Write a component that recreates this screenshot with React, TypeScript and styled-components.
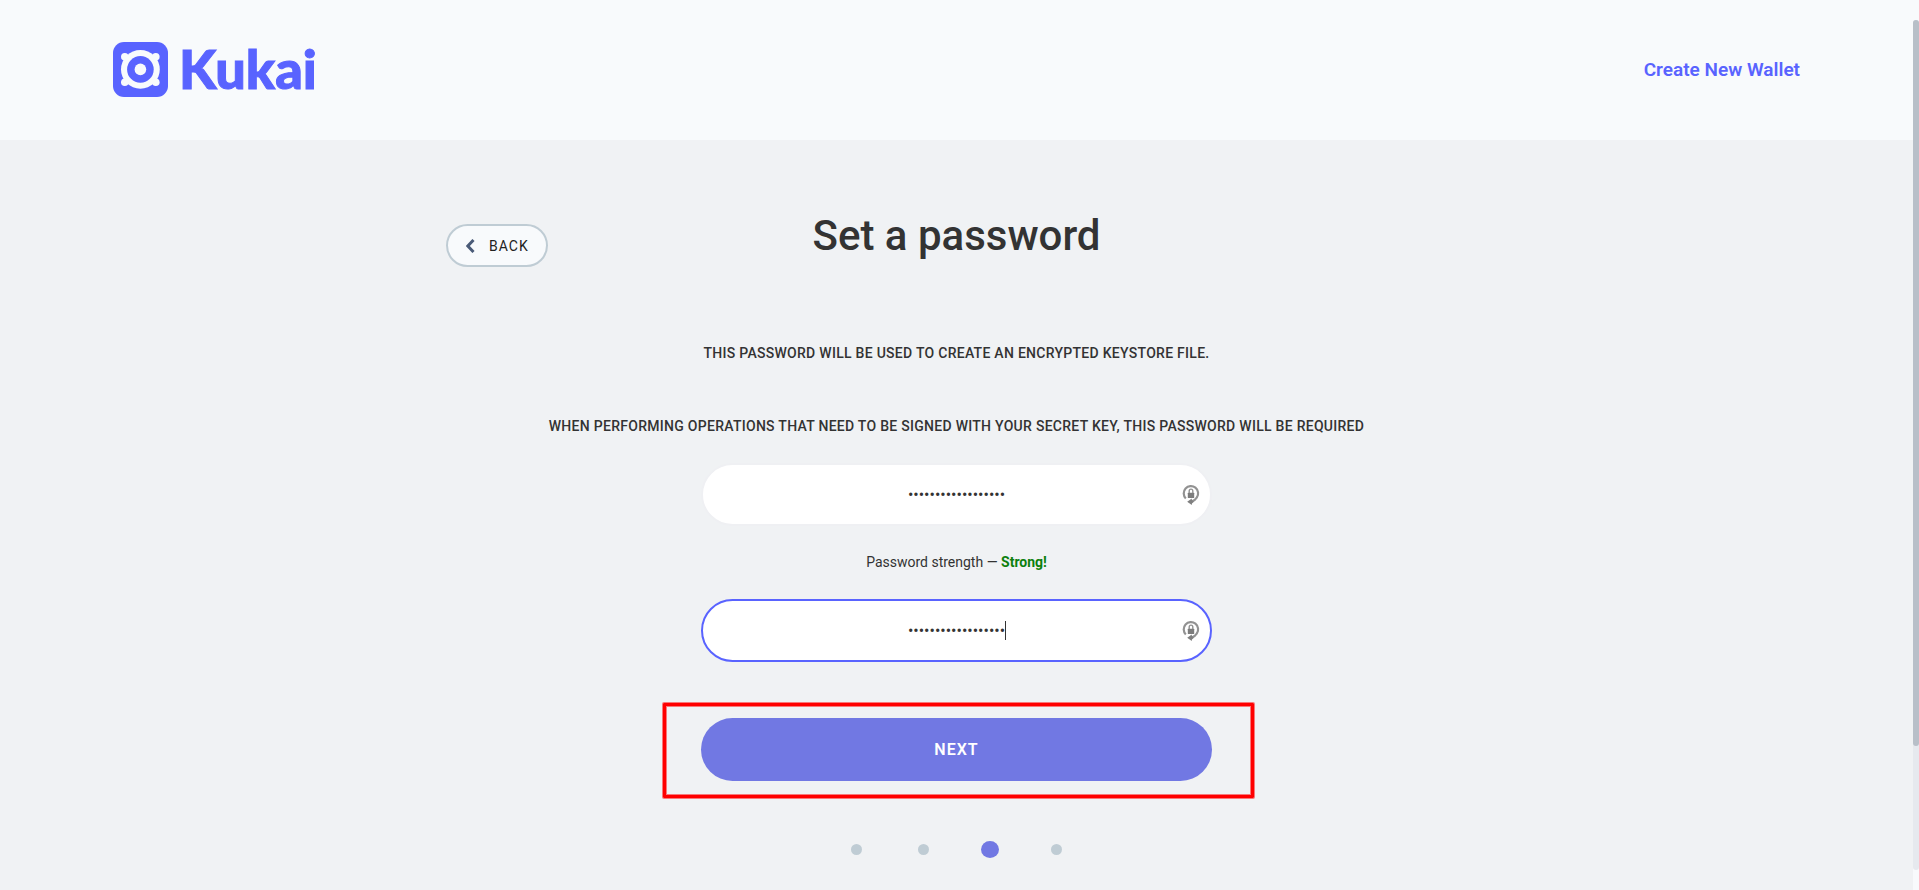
import React from 'react';
import styled, { createGlobalStyle } from 'styled-components';

const GlobalStyle = createGlobalStyle`
  *, *::before, *::after { box-sizing: border-box; }
  body {
    margin: 0;
    background: #f8fafc;
    color: #333;
    font-family: Roboto, "Liberation Sans", sans-serif;
  }
`;

const Shell = styled.div`
  display: flex;
  min-height: 100vh;
`;

const Page = styled.div`
  flex: 1;
  min-width: 0;
  display: flex;
  flex-direction: column;
`;

const ScrollRail = styled.div`
  width: 6px;
  padding: 20px 0;
  display: flex;
`;

const ScrollTrack = styled.div`
  flex: 1;
  border-radius: 3px;
  background: #e6e9ee;
`;

const ScrollThumb = styled.div`
  height: 85.4%;
  border-radius: 3px;
  background: #b8bfc8;
`;

const Header = styled.header`
  display: flex;
  align-items: center;
  justify-content: space-between;
  height: 140px;
  padding: 0 113px;
`;

const LogoLink = styled.a`
  display: block;
  line-height: 0;
`;

const LogoImage = styled.svg`
  overflow: visible;
`;

const HeaderLink = styled.a`
  color: #5963ff;
  font-size: 19px;
  font-weight: 600;
  line-height: 24px;
  text-decoration: none;
`;

const Main = styled.main`
  flex: 1;
  display: flex;
  flex-direction: column;
  align-items: center;
  padding: 64px 24px 32px;
  background: #f0f2f4;
`;

const TitleRow = styled.div`
  display: grid;
  grid-template-columns: 1fr auto 1fr;
  align-items: start;
  width: 100%;
  max-width: 1021px;
`;

const BackButton = styled.button`
  justify-self: start;
  display: flex;
  align-items: center;
  gap: 14px;
  height: 43px;
  margin-top: 20px;
  padding: 0 17px 0 18px;
  border: 2px solid #bfccd4;
  border-radius: 22px;
  background: #f8fafc;
  color: #222;
  font-family: inherit;
  font-size: 14px;
  letter-spacing: 1px;
  cursor: pointer;
`;

const Title = styled.h1`
  margin: 0;
  font-size: 42px;
  font-weight: 500;
  line-height: 64px;
`;

const Note = styled.p`
  margin: 0;
  font-size: 14px;
  font-weight: 500;
  line-height: 24px;
  letter-spacing: 0.02em;
  text-align: center;
  text-transform: uppercase;
`;

const Notes = styled.div`
  display: grid;
  gap: 49px;
  margin: 73px 0 25px;
`;

const Form = styled.form`
  display: flex;
  flex-direction: column;
  width: 100%;
  max-width: 511px;
`;

const Field = styled.label`
  position: relative;
  display: block;
`;

const PasswordInput = styled.input<{ $active?: boolean }>`
  display: block;
  width: 100%;
  height: 63px;
  padding: 0 40px;
  border: 2px solid ${({ $active }) => ($active ? '#5963ff' : '#eff0f3')};
  border-radius: 32px;
  outline: none;
  background: #fff;
  color: #333;
  caret-color: transparent;
  font-family: inherit;
  font-size: 16px;
  text-align: center;
`;

const Caret = styled.span`
  position: absolute;
  top: 22px;
  left: calc(50% + 48px);
  width: 1px;
  height: 19px;
  background: #333;
`;

const FieldIcon = styled.svg`
  position: absolute;
  top: 21px;
  right: 12px;
`;

const Strength = styled.p`
  margin: 24px 0 25px;
  font-size: 14px;
  line-height: 24px;
  text-align: center;
`;

const Strong = styled.strong`
  color: #0c800c;
`;

const NextArea = styled.div`
  position: relative;
  margin-top: 56px;
`;

const NextButton = styled.button`
  display: block;
  width: 100%;
  height: 63px;
  border: 0;
  border-radius: 32px;
  background: #7178e3;
  color: #fff;
  font-family: inherit;
  font-size: 16px;
  font-weight: 600;
  letter-spacing: 1px;
  cursor: pointer;
`;

const Highlight = styled.div`
  position: absolute;
  inset: -15px -42px -17px -38px;
  border: 3px solid #ff0000;
  border-radius: 1px;
  box-shadow: 0 0 0 1px rgba(255, 0, 0, 0.5), inset 0 0 0 1px rgba(255, 0, 0, 0.5);
  pointer-events: none;
`;

const Steps = styled.ol`
  display: flex;
  align-items: center;
  justify-content: center;
  gap: 56px;
  height: 18px;
  margin: 59px 0 0;
  padding: 0;
  list-style: none;
`;

const Step = styled.li<{ $current?: boolean }>`
  width: ${({ $current }) => ($current ? '18px' : '11px')};
  height: ${({ $current }) => ($current ? '17px' : '11px')};
  margin: 0 ${({ $current }) => ($current ? '-4px' : '0')};
  border-radius: 50%;
  background: ${({ $current }) => ($current ? '#7178e3' : '#bfccd4')};
`;

function Logo() {
  return (
    <LogoImage width="204" height="56" viewBox="0 0 204 56" role="img" aria-label="Kukai">
      <rect width="55" height="55" rx="11" fill="#5963ff" />
      <g fill="#f8fafc">
        <circle cx="27.4" cy="27.4" r="19.4" />
        <circle cx="11.8" cy="14.8" r="3.8" />
        <circle cx="42.8" cy="14.8" r="3.8" />
        <circle cx="11.8" cy="40.2" r="3.8" />
        <circle cx="42.8" cy="40.2" r="3.8" />
      </g>
      <circle cx="27.4" cy="27.4" r="13.3" fill="#5963ff" />
      <circle cx="27.4" cy="27.4" r="5.8" fill="#f8fafc" />
      <text
        x="66"
        y="47"
        fill="#5963ff"
        stroke="#5963ff"
        strokeWidth="1"
        fontFamily="Lato, sans-serif"
        fontWeight="900"
        fontSize="54"
      >
        Kukai
      </text>
    </LogoImage>
  );
}

function KeyIcon() {
  return (
    <FieldIcon width="18" height="22" viewBox="0 0 18 22" fill="none" aria-hidden="true">
      <path d="M3.800 14.400A7.200 7.200 0 1 1 14.800 13.500Q13.200 16.400 9.500 17.600" stroke="#929292" strokeWidth="2.200" />
      <path d="M9.800 14.600v6.400L5.200 17.800z" fill="#808080" />
      <path d="M9 15.500l3 2.300-3 2.400z" fill="#808080" />
      <rect x="5.800" y="8.700" width="6.400" height="5.200" rx="0.500" fill="#7c7c7c" />
      <path d="M7.200 9V6.900a1.800 1.800 0 0 1 3.600 0V9" stroke="#929292" strokeWidth="1.400" />
    </FieldIcon>
  );
}

export default function App() {
  return (
    <>
      <GlobalStyle />
      <Shell>
        <Page>
          <Header>
            <LogoLink href="#home"><Logo /></LogoLink>
            <HeaderLink href="#create">Create New Wallet</HeaderLink>
          </Header>
          <Main>
            <TitleRow>
              <BackButton type="button">
                <svg width="9" height="14" viewBox="0 0 9 14" fill="none" aria-hidden="true">
                  <path d="M7.500 1L1.800 7l5.700 6" stroke="#4a5b78" strokeWidth="3" />
                </svg>
                BACK
              </BackButton>
              <Title>Set a password</Title>
            </TitleRow>
            <Notes>
              <Note>This password will be used to create an encrypted keystore file.</Note>
              <Note>When performing operations that need to be signed with your secret key, this password will be required</Note>
            </Notes>
            <Form onSubmit={(event) => event.preventDefault()}>
              <Field>
                <PasswordInput type="password" aria-label="Password" defaultValue="correcthorsebatter" />
                <KeyIcon />
              </Field>
              <Strength>Password strength — <Strong>Strong!</Strong></Strength>
              <Field>
                <PasswordInput $active autoFocus type="password" aria-label="Confirm password" defaultValue="correcthorsebatter" />
                <Caret />
                <KeyIcon />
              </Field>
              <NextArea>
                <NextButton type="submit">NEXT</NextButton>
                <Highlight />
              </NextArea>
            </Form>
            <Steps aria-label="Progress">
              <Step />
              <Step />
              <Step $current aria-current="step" />
              <Step />
            </Steps>
          </Main>
        </Page>
        <ScrollRail aria-hidden="true">
          <ScrollTrack><ScrollThumb /></ScrollTrack>
        </ScrollRail>
      </Shell>
    </>
  );
}
